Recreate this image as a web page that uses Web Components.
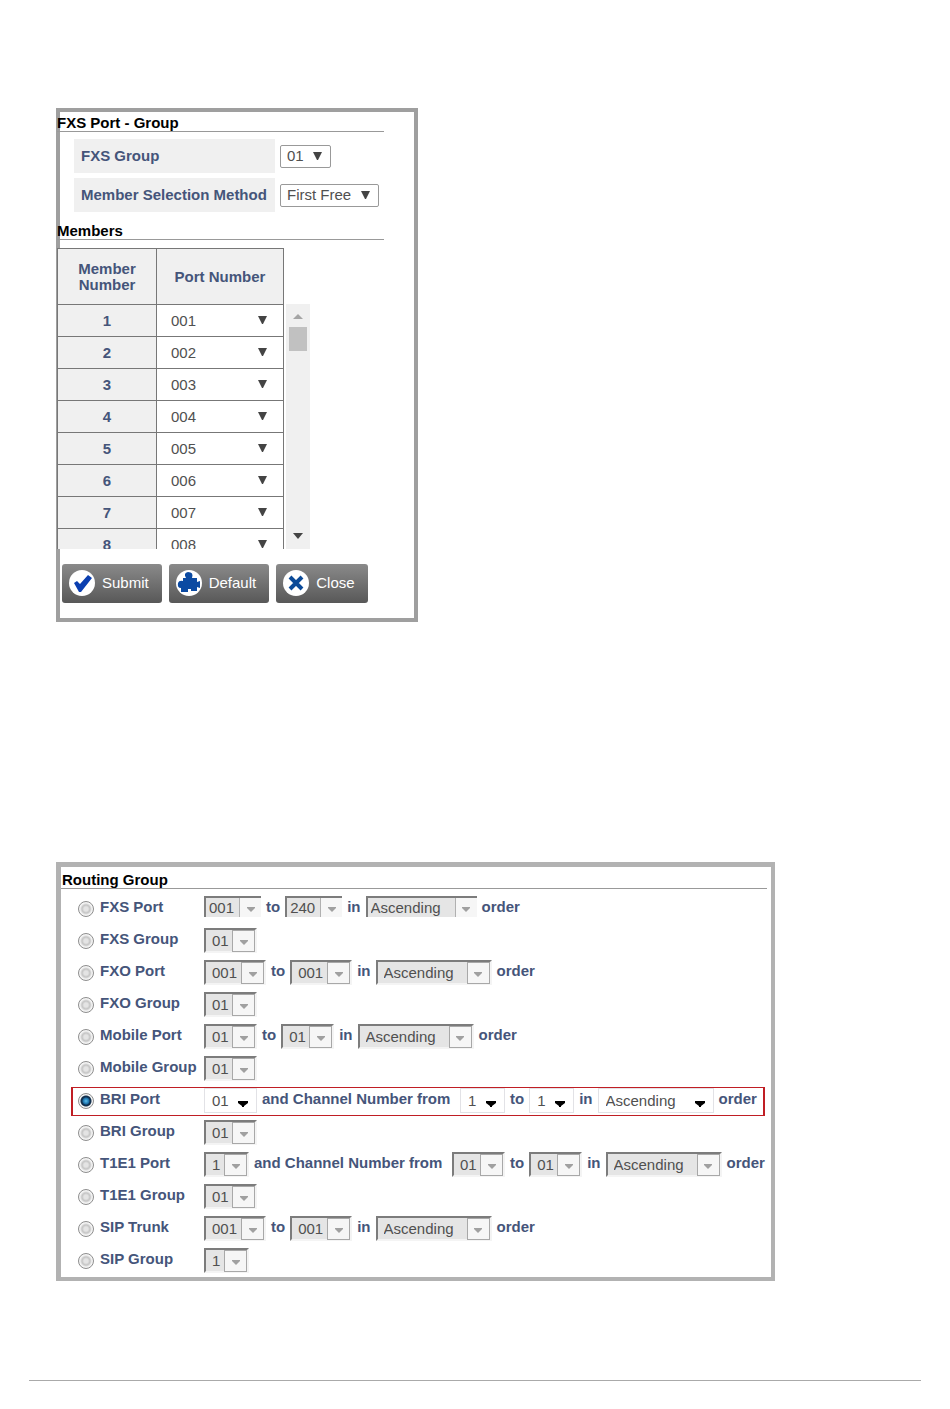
<!DOCTYPE html>
<html lang="en">
<head>
<meta charset="utf-8">
<title>Port and routing groups</title>
<style>
  body {
    margin: 0;
    padding: 108px 29px 28px;
    background: #fff;
    color: #45557a;
    font: 15px/16px "Liberation Sans", Arial, sans-serif;
  }
  main {
    display: flex;
    flex-direction: column;
    align-items: flex-start;
    gap: 240px;
    padding: 0 27px;
  }
  fxs-panel { width: 100%; max-width: 362px; }
  routing-panel { width: 100%; max-width: 719px; }
  hr {
    margin: 99px 0 0;
    border: 0;
    border-top: 1px solid #aaa;
  }
</style>
</head>
<body>
<main>
  <fxs-panel></fxs-panel>
  <routing-panel></routing-panel>
</main>
<hr>

<script>
// section-title: black heading with a rule under it
class SectionTitle extends HTMLElement {
  constructor() {
    super();
    this.attachShadow({ mode: "open" }).innerHTML = `
      <style>
        :host { display: block; padding-top: 3px; border-bottom: 1px solid #999; color: #000; }
        h2 { margin: 0; font: inherit; font-weight: bold; }
      </style>
      <h2><slot></slot></h2>`;
  }
}
customElements.define("section-title", SectionTitle);

// combo-box: a select with its own arrow
// look = "boxed" | "compact" | "open" | "round" | "cell"
const greyArrow = `<svg width="8" height="5"><path d="M0 0H8V1L4 5L0 1Z" fill="#a0a0a0"/></svg>`;
const darkArrow = `<svg width="9" height="8"><path d="M0 0H9L5 8H4Z" fill="#444"/></svg>`;
const arrows = {
  boxed: greyArrow,
  compact: greyArrow,
  open: `<svg width="10" height="7"><path d="M0 0H10V2L6 5V6H4V5L0 2Z" fill="#000"/></svg>`,
  round: darkArrow,
  cell: darkArrow
};

class ComboBox extends HTMLElement {
  constructor() {
    super();
    this.attachShadow({ mode: "open" });
  }
  connectedCallback() {
    const look = this.getAttribute("look");
    const options = this.getAttribute("options").split(",");
    const off = look === "boxed" || look === "compact" ? "disabled" : "";
    this.shadowRoot.innerHTML = `
      <style>
        :host { display: inline-grid; flex: none; }
        .look { display: grid; }
        select, .arrow { grid-area: 1 / 1; }
        select {
          appearance: none;
          box-sizing: border-box;
          height: 25px;
          margin: 0;
          border: 1px solid #999;
          border-radius: 0;
          background: #fff;
          color: #505050;
          font: inherit;
          opacity: 1;
        }
        .arrow {
          justify-self: end;
          display: flex;
          align-items: center;
          justify-content: center;
          box-sizing: border-box;
          pointer-events: none;
        }
        .boxed select {
          padding: 0 26px 0 6px;
          border: 2px solid #7c7c7c;
          border-right-color: #f4f4f4;
          border-bottom-color: #f4f4f4;
          background: #e5e5e5;
        }
        .boxed .arrow {
          width: 23px;
          margin: 2px 2px 1px 0;
          padding-top: 2px;
          border: 1px solid #a8a8a8;
          background: #f6f6f6;
        }
        .compact select {
          height: 21px;
          padding: 0 26px 0 3px;
          border: solid #7c7c7c;
          border-width: 2px 0 0 2px;
          background: #e5e5e5;
        }
        .compact .arrow {
          width: 22px;
          margin-top: 2px;
          padding-top: 4px;
          border-left: 1px solid #b0b0b0;
          background: #f6f6f6;
        }
        .open select { padding: 0 27px 0 7px; border-color: #e2e2e6; }
        .open .arrow { width: 28px; padding-top: 7px; }
        .round select { height: 23px; padding: 0 26px 0 6px; border-radius: 2px; }
        .round .arrow { width: 28px; }
        .cell select { width: 100%; height: 31px; padding: 0 36px 0 14px; border: 0; }
        .cell .arrow { width: 42px; padding-bottom: 2px; }
      </style>
      <div class="look ${look}">
        <select aria-label="${this.getAttribute("label")}" ${off}>
          ${options.map(o => `<option>${o}</option>`).join("")}
        </select>
        <span class="arrow">${arrows[look]}</span>
      </div>`;
  }
}
customElements.define("combo-box", ComboBox);

// tool-button: grey gradient button, the icon comes in through its slot
class ToolButton extends HTMLElement {
  constructor() {
    super();
    this.attachShadow({ mode: "open" }).innerHTML = `
      <style>
        :host { display: block; }
        button {
          display: flex;
          align-items: center;
          gap: 7px;
          height: 39px;
          padding: 0 13px 2px 7px;
          border: 0;
          border-radius: 3px;
          background: linear-gradient(#8a8a8a, #585858);
          color: #fff;
          font: inherit;
        }
      </style>
      <button type="button"><slot name="icon"></slot><span><slot></slot></span></button>`;
  }
}
customElements.define("tool-button", ToolButton);

// fxs-panel: group settings and the list of members
class FxsPanel extends HTMLElement {
  constructor() {
    super();
    const ports = [1, 2, 3, 4, 5, 6, 7, 8];
    this.attachShadow({ mode: "open" }).innerHTML = `
      <style>
        :host { display: block; box-sizing: border-box; border: 4px solid #9f9f9f; padding-bottom: 15px; }
        .content { margin-left: -3px; }
        section-title { margin-right: 30px; }
        .fields {
          display: grid;
          grid-template-columns: 201px max-content;
          gap: 5px;
          margin: 7px 0 8px 17px;
          align-items: center;
        }
        .fields b { padding: 9px 0 9px 7px; background: #f0f0f0; white-space: nowrap; }
        .fields combo-box { justify-self: start; }
        .members { display: flex; gap: 2px; margin-top: 8px; height: 301px; overflow: hidden; }
        .list { flex: none; }
        table { border-collapse: collapse; table-layout: fixed; width: 227px; }
        th, td { box-sizing: border-box; height: 32px; padding: 0; border: 1px solid #777; }
        th { background: #f0f0f0; text-align: center; }
        thead th { height: 56px; }
        .number { width: 99px; }
        td combo-box { display: grid; }
        .scroll {
          display: flex;
          flex-direction: column;
          align-items: center;
          width: 24px;
          margin-top: 56px;
          padding: 10px 0;
          box-sizing: border-box;
          background: #f0f0f0;
        }
        .thumb { width: 18px; height: 24px; margin: 7px 0 auto; background: #c1c1c1; }
        .buttons { display: flex; gap: 7px; margin: 15px 0 0 5px; }
      </style>
      <div class="content">
        <section-title>FXS Port - Group</section-title>
        <div class="fields">
          <b>FXS Group</b><combo-box look="round" options="01" label="FXS Group"></combo-box>
          <b>Member Selection Method</b><combo-box look="round" options="First Free" label="Member Selection Method"></combo-box>
        </div>
        <section-title>Members</section-title>
        <div class="members">
          <div class="list">
            <table>
              <thead>
                <tr><th class="number" scope="col">Member<br>Number</th><th scope="col">Port Number</th></tr>
              </thead>
              <tbody>
                ${ports.map(n => `<tr>
                  <th scope="row">${n}</th>
                  <td><combo-box look="cell" options="00${n}" label="Port of member ${n}"></combo-box></td>
                </tr>`).join("")}
              </tbody>
            </table>
          </div>
          <div class="scroll">
            <svg width="10" height="6"><path d="M0 5L5 0L10 5Z" fill="#a5a5a5"/></svg>
            <div class="thumb"></div>
            <svg width="10" height="6"><path d="M0 0H10L5 6Z" fill="#444"/></svg>
          </div>
        </div>
        <div class="buttons">
          <tool-button>
            <svg slot="icon" width="26" height="26" viewBox="0 0 26 26">
              <circle cx="13" cy="13" r="13" fill="#fff"/>
              <path d="M5 13L8 11L11 14L19 5L23 8L12 22H10Z" fill="#0b3fb0"/>
            </svg>Submit</tool-button>
          <tool-button>
            <svg slot="icon" width="26" height="26" viewBox="0 0 26 26">
              <circle cx="13" cy="13" r="13" fill="#fff"/>
              <path d="M7 8H10Q7 3 12 2Q18 2 16 8H21V12L24 11V18L21 17V21H15V19H12V22H5V18Q1 18 2 13Q3 10 7 11Z" fill="#0b4aa2"/>
            </svg>Default</tool-button>
          <tool-button>
            <svg slot="icon" width="26" height="26" viewBox="0 0 26 26">
              <circle cx="13" cy="13" r="13" fill="#fff"/>
              <path d="M7 7L19 19M19 7L7 19" fill="none" stroke="#0b4a98" stroke-width="4"/>
            </svg>Close</tool-button>
        </div>
      </div>`;
  }
}
customElements.define("fxs-panel", FxsPanel);

// routing-panel: one radio per route; an array item is a drop-down, a string is text
const order = ["Ascending", "Descending"];
const from = "and Channel Number from";
const routes = [
  ["FXS Port", ["001"], "to", ["240"], "in", order, "order"],
  ["FXS Group", ["01"]],
  ["FXO Port", ["001"], "to", ["001"], "in", order, "order"],
  ["FXO Group", ["01"]],
  ["Mobile Port", ["01"], "to", ["01"], "in", order, "order"],
  ["Mobile Group", ["01"]],
  ["BRI Port", ["01"], from, ["1"], "to", ["1"], "in", order, "order"],
  ["BRI Group", ["01"]],
  ["T1E1 Port", ["1"], from, ["01"], "to", ["01"], "in", order, "order"],
  ["T1E1 Group", ["01"]],
  ["SIP Trunk", ["001"], "to", ["001"], "in", order, "order"],
  ["SIP Group", ["1"]]
];

class RoutingPanel extends HTMLElement {
  constructor() {
    super();
    const row = ([name, ...parts], i) => {
      const picked = name === "BRI Port";
      const look = picked ? "open" : i === 0 ? "compact" : "boxed";
      return `
        <div class="row ${picked ? "picked" : ""}">
          <input type="radio" name="route" id="route${i}" ${picked ? "checked" : ""}>
          <label for="route${i}">${name}</label>
          <div class="parts">
            ${parts.map(p => Array.isArray(p)
              ? `<combo-box look="${look}" options="${p}" label="${name}"></combo-box>`
              : `<span class="${p === from ? "from" : ""}">${p}</span>`).join("")}
          </div>
        </div>`;
    };
    this.attachShadow({ mode: "open" }).innerHTML = `
      <style>
        :host {
          display: block;
          box-sizing: border-box;
          padding: 2px 0 1px;
          border: solid #b2b2b2;
          border-width: 5px 4px 4px 5px;
        }
        section-title { margin-right: 4px; padding-left: 1px; }
        .rows { display: flex; flex-direction: column; gap: 3px; margin: 6px 6px 0 10px; }
        .row {
          display: flex;
          align-items: flex-start;
          box-sizing: border-box;
          height: 29px;
          padding-left: 5px;
          border: solid transparent;
          border-width: 1px 2px;
          white-space: nowrap;
        }
        .picked { border-color: #c01e24; }
        label, span { font-weight: bold; line-height: 22px; }
        label { flex: none; width: 104px; }
        .parts { display: flex; align-items: flex-start; gap: 5px; }
        .from { min-width: 193px; }
        input {
          appearance: none;
          flex: none;
          box-sizing: border-box;
          width: 16px;
          height: 16px;
          margin: 5px 6px 0 0;
          border: 1px solid #8e8e8e;
          border-radius: 50%;
          background: radial-gradient(circle, #e4e4e4 0 2px, #c4c4c4 4px, #f4f4f4 6px);
        }
        input:checked {
          background: radial-gradient(circle, #5cc0ee 0, #1b6fa8 3px, #12304e 4px, #12304e 5px, #f4f4f4 6px);
        }
      </style>
      <section-title>Routing Group</section-title>
      <div class="rows">${routes.map(row).join("")}</div>`;
  }
}
customElements.define("routing-panel", RoutingPanel);
</script>
</body>
</html>
